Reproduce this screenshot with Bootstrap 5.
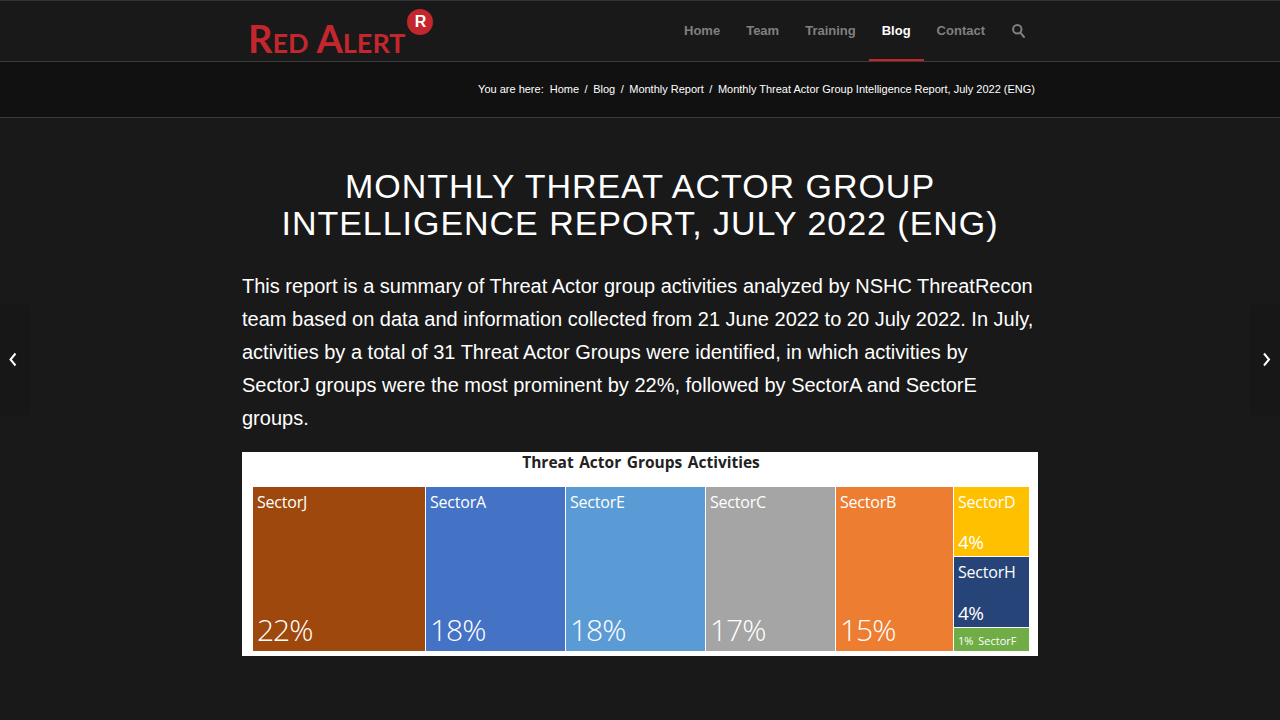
<!DOCTYPE html>
<html lang="en">

<head>
  <meta charset="UTF-8" />
  <title>Monthly Threat Actor Group Intelligence Report, July 2022 (ENG)</title>
  <link href="https://cdn.jsdelivr.net/npm/bootstrap@5.3.2/dist/css/bootstrap.min.css" rel="stylesheet" />
  <style>
    body {
      background: #191919;
      color: #fff;
      font-family: "Liberation Sans", Arial, sans-serif;
      overflow: hidden;
    }

    .page-wrap {
      width: 796px;
      margin: 0 auto;
    }

    .top-head {
      height: 62px;
      border-top: 1px solid #333;
      border-bottom: 1px solid #3a3a3a;
    }

    .logo {
      height: 60px;
      padding-left: 6px;
      color: #c4262e;
      text-decoration: none;
    }

    .logo-text {
      font-family: Lato, sans-serif;
      font-size: 38px;
      font-weight: 700;
      font-variant: small-caps;
      line-height: 1;
      margin-top: 18px;
      white-space: nowrap;
    }

    .logo-badge {
      width: 26px;
      height: 26px;
      margin: 8px 0 0 2px;
      border-radius: 50%;
      background: #c4262e;
      color: #fff;
      font-size: 16px;
      font-weight: 700;
      line-height: 26px;
      text-align: center;
    }

    .main-nav a {
      display: block;
      height: 60px;
      padding: 0 13px;
      color: #808080;
      font-size: 13px;
      font-weight: 700;
      line-height: 59px;
      text-decoration: none;
    }

    .main-nav a.active {
      color: #fff;
      border-bottom: 2px solid #c4262e;
    }

    .main-nav a.search-link {
      padding: 0 13px 0 14px;
    }

    .search-link svg {
      display: block;
      margin-top: 23px;
    }

    .crumb-bar {
      height: 56px;
      background: #111;
      border-bottom: 1px solid #3a3a3a;
      font-size: 11px;
      color: #fff;
    }

    .crumb-bar a {
      color: #fff;
      text-decoration: none;
    }

    .crumb-bar .sep {
      padding: 0 5.5px;
    }

    .crumb-bar .you {
      padding-right: 6px;
    }

    .crumb-row {
      padding-right: 3px;
    }

    .post-title {
      margin: 50px 0 0;
      font-family: "Liberation Sans", Arial, sans-serif;
      font-size: 34px;
      font-weight: 400;
      line-height: 37px;
      letter-spacing: 0.97px;
      text-transform: uppercase;
      text-align: center;
    }

    .post-text {
      margin: 28px 0 17px;
      font-size: 20px;
      line-height: 33px;
    }

    .chart {
      height: 204px;
      background: #fff;
      padding: 0 9px 5px 11px;
      font-family: "Open Sans", sans-serif;
    }

    .chart-title {
      height: 35px;
      color: #222;
      font-size: 15.5px;
      font-weight: 700;
      line-height: 21px;
      text-align: center;
      word-spacing: 1.5px;
    }

    .tree {
      height: 164px;
      gap: 1px;
    }

    .cell {
      padding: 3px 4px 0;
      color: #fff;
      font-size: 16px;
      line-height: 24px;
    }

    .cell span:first-child {
      letter-spacing: -0.2px;
    }

    .cell .pct {
      font-size: 30px;
      font-weight: 300;
      letter-spacing: -1px;
      line-height: 36px;
      margin-bottom: 3px;
    }

    .cell-sm .pct {
      font-size: 19px;
      font-weight: 400;
      letter-spacing: -0.5px;
      line-height: 24px;
      margin-bottom: 2px;
    }

    .w-j { width: 172px; background: #9e480e; }
    .w-a { width: 139px; background: #4472c4; }
    .w-e { width: 139px; background: #5b9bd5; }
    .w-c { width: 129px; background: #a5a5a5; }
    .w-b { width: 117px; background: #ed7d31; }
    .w-r { width: 75px; gap: 1px; }
    .h-d { height: 69px; background: #ffc000; }
    .h-h { height: 70px; background: #264478; }
    .h-f {
      height: 23px;
      padding: 0 4px;
      background: #70ad47;
      font-size: 11px;
      line-height: 25px;
      word-spacing: 2px;
      white-space: nowrap;
    }

    .side-nav {
      position: absolute;
      top: 305px;
      width: 30px;
      height: 110px;
      background: #171717;
    }

    .side-nav.prev { left: 0; }
    .side-nav.next { right: 0; }
  </style>
</head>

<body>
  <header class="top-head">
    <div class="page-wrap d-flex justify-content-between">
      <a href="#" class="logo d-flex">
        <span class="logo-text">Red Alert</span>
        <span class="logo-badge">R</span>
      </a>
      <nav class="main-nav d-flex">
        <a href="#">Home</a>
        <a href="#">Team</a>
        <a href="#">Training</a>
        <a href="#" class="active">Blog</a>
        <a href="#">Contact</a>
        <a href="#" class="search-link" aria-label="Search">
          <svg width="13" height="14" viewBox="0 0 13 14" fill="none" stroke="#808080" stroke-width="2">
            <circle cx="5.3" cy="5.3" r="4.2" />
            <path d="M8.4 8.6 12 13" stroke-linecap="round" />
          </svg>
        </a>
      </nav>
    </div>
  </header>

  <div class="crumb-bar">
    <div class="page-wrap crumb-row d-flex justify-content-end align-items-center h-100">
      <span class="you">You are here:</span>
      <a href="#">Home</a><span class="sep">/</span>
      <a href="#">Blog</a><span class="sep">/</span>
      <a href="#">Monthly Report</a><span class="sep">/</span>
      <span>Monthly Threat Actor Group Intelligence Report, July 2022 (ENG)</span>
    </div>
  </div>

  <main class="page-wrap">
    <h1 class="post-title">Monthly Threat Actor Group<br />Intelligence Report, July 2022 (ENG)</h1>
    <p class="post-text">This report is a summary of Threat Actor group activities analyzed by NSHC ThreatRecon team based on data and information collected from 21 June 2022 to 20 July 2022. In July, activities by a total of 31 Threat Actor Groups were identified, in which activities by SectorJ groups were the most prominent by 22%, followed by SectorA and SectorE groups.</p>

    <div class="chart">
      <div class="chart-title">Threat Actor Groups Activities</div>
      <div class="tree d-flex">
        <div class="cell w-j d-flex flex-column justify-content-between"><span>SectorJ</span><span class="pct">22%</span></div>
        <div class="cell w-a d-flex flex-column justify-content-between"><span>SectorA</span><span class="pct">18%</span></div>
        <div class="cell w-e d-flex flex-column justify-content-between"><span>SectorE</span><span class="pct">18%</span></div>
        <div class="cell w-c d-flex flex-column justify-content-between"><span>SectorC</span><span class="pct">17%</span></div>
        <div class="cell w-b d-flex flex-column justify-content-between"><span>SectorB</span><span class="pct">15%</span></div>
        <div class="w-r d-flex flex-column">
          <div class="cell cell-sm h-d d-flex flex-column justify-content-between"><span>SectorD</span><span class="pct">4%</span></div>
          <div class="cell cell-sm h-h d-flex flex-column justify-content-between"><span>SectorH</span><span class="pct">4%</span></div>
          <div class="cell h-f">1% SectorF</div>
        </div>
      </div>
    </div>
  </main>

  <a href="#" class="side-nav prev d-flex align-items-center" aria-label="Previous">
    <svg class="ms-2" width="10" height="108" viewBox="0 0 10 108" fill="none" stroke="#fff" stroke-width="2">
      <path d="M7.5 47.5 2.5 53.5 7.5 59.5" />
    </svg>
  </a>
  <a href="#" class="side-nav next d-flex align-items-center justify-content-end" aria-label="Next">
    <svg class="me-2" width="10" height="108" viewBox="0 0 10 108" fill="none" stroke="#fff" stroke-width="2">
      <path d="M2 47.5 7 53.5 2 59.5" />
    </svg>
  </a>

  <script src="https://cdn.jsdelivr.net/npm/bootstrap@5.3.2/dist/js/bootstrap.bundle.min.js"></script>
</body>

</html>
